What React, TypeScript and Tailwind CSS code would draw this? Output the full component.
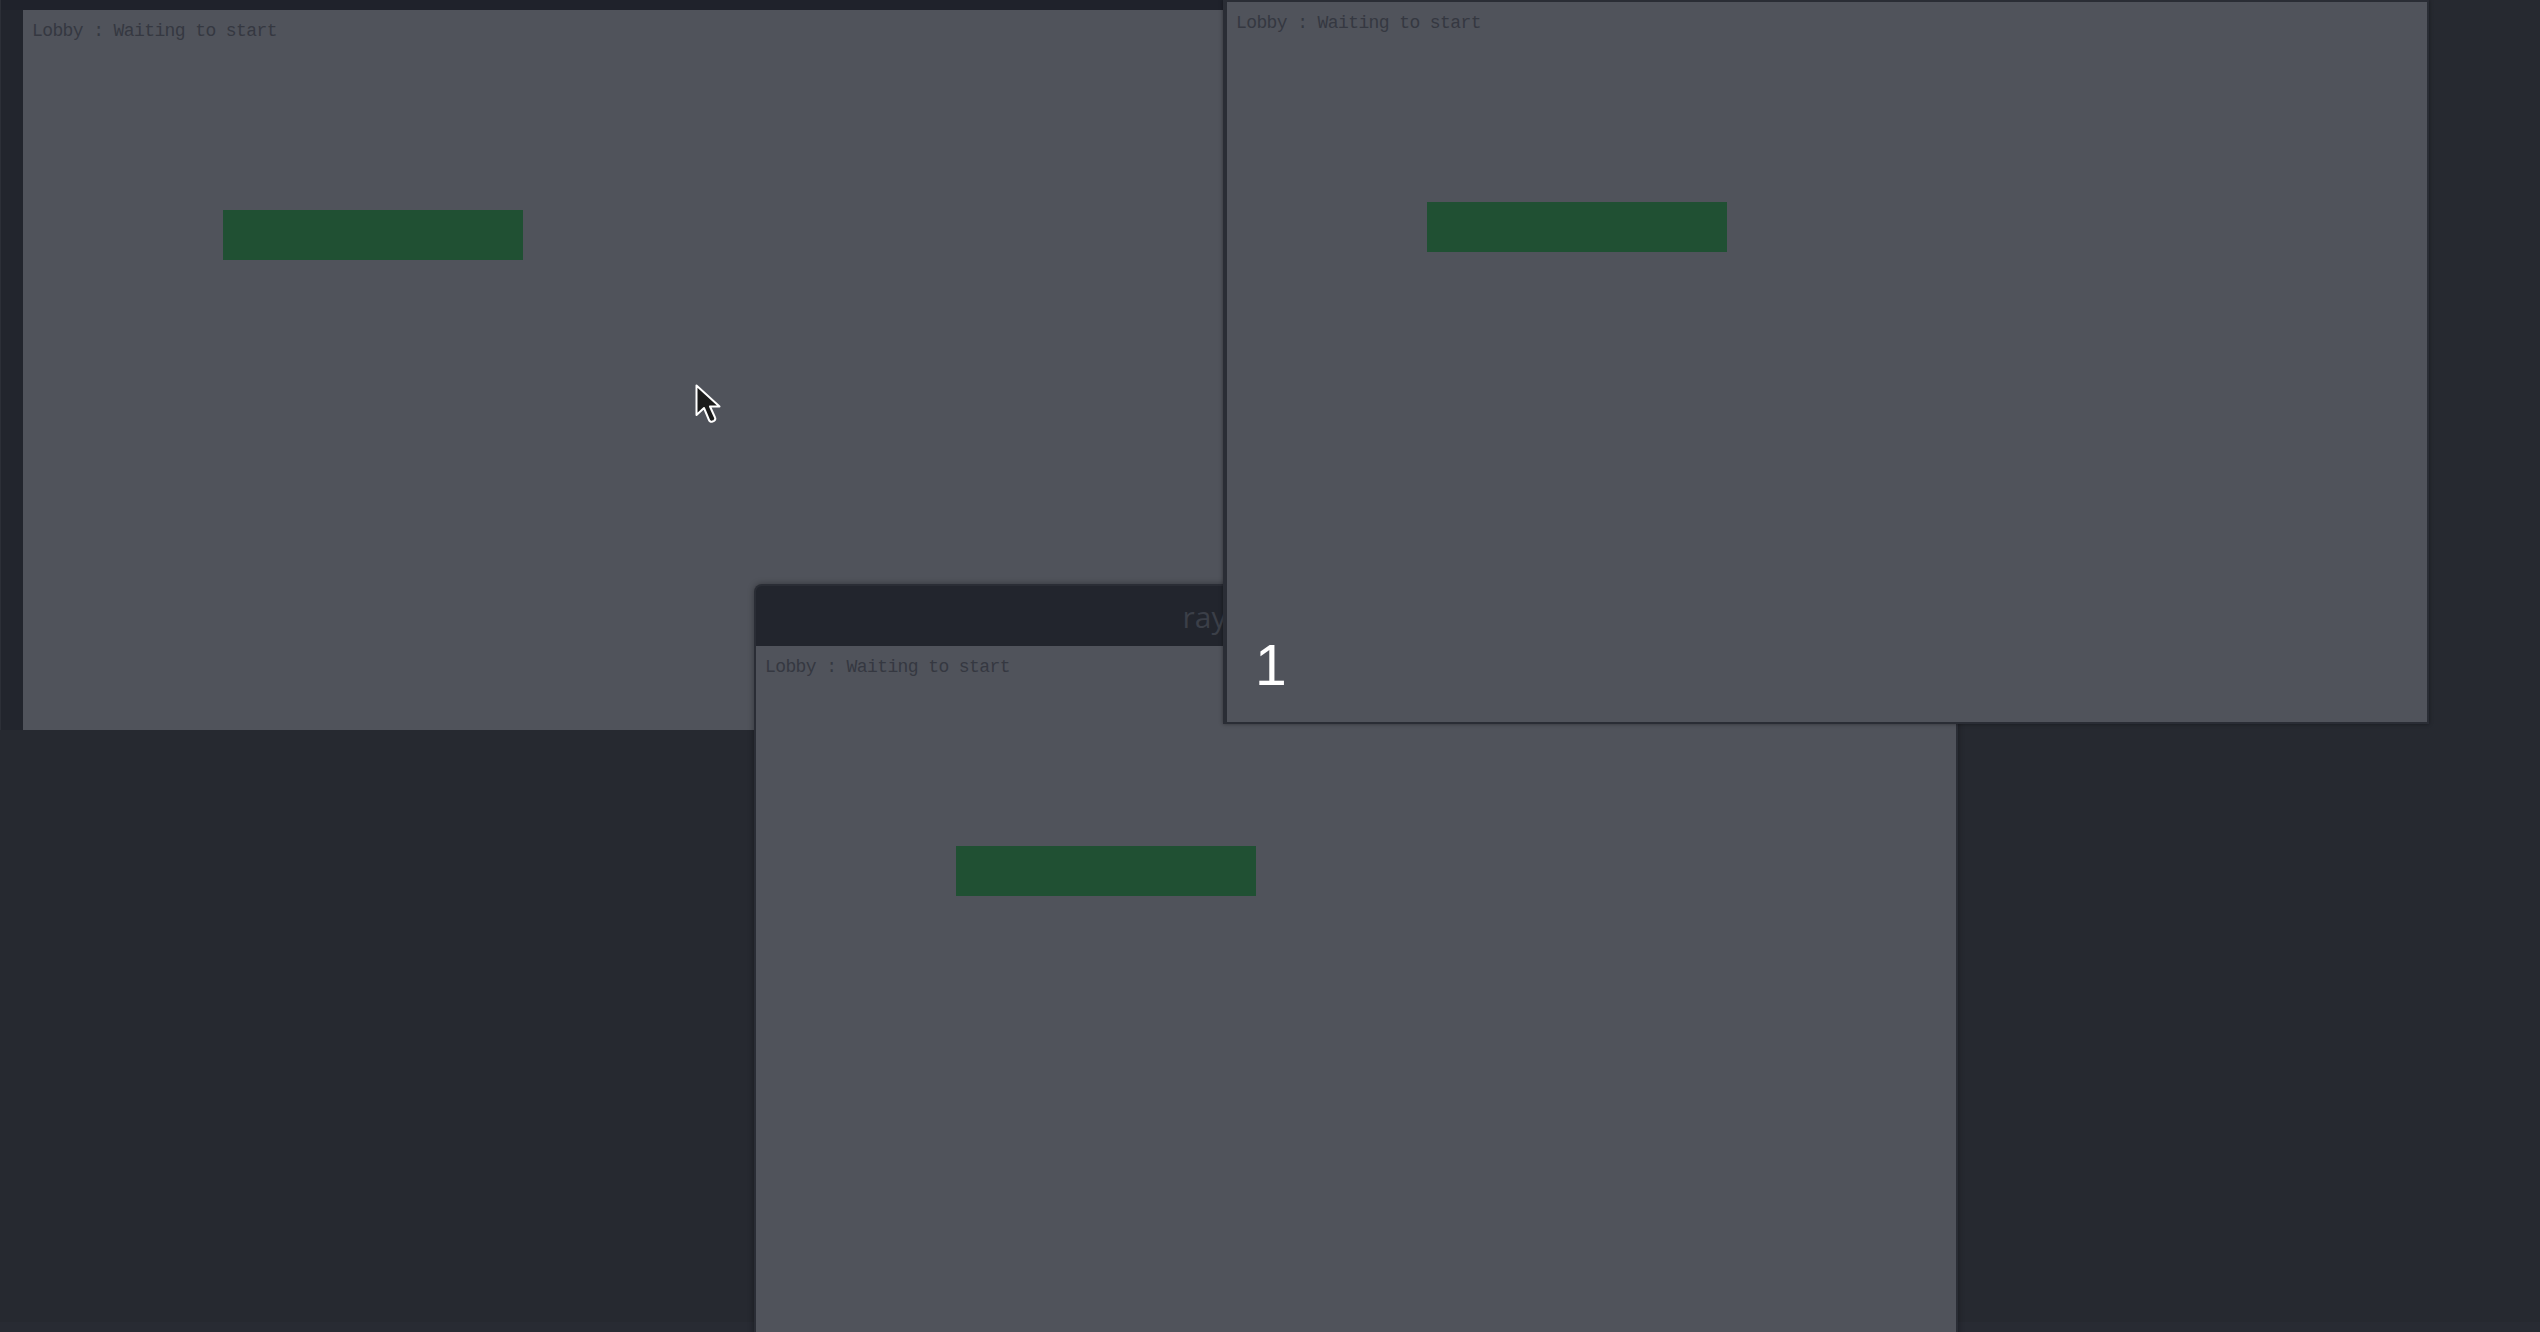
import React from "react";

function GameCanvas({ showCount }: { showCount?: boolean }) {
  return (
    <div className="flex flex-col items-start w-[1200px] h-[720px] bg-[#50535b] overflow-hidden pt-[9px]">
      <p className="pl-[9px] text-[18px] leading-[24px] tracking-[-0.6px] text-[#353841] font-['Liberation_Mono',monospace]">
        Lobby : Waiting to start
      </p>
      <div className="ml-[200px] mt-[167px] w-[300px] h-[50px] bg-[#205033]" />
      {showCount && (
        <span className="ml-[28px] mt-[378px] text-[57px] leading-[70px] text-white font-['Liberation_Sans',sans-serif]">
          1
        </span>
      )}
    </div>
  );
}

function Cursor() {
  return (
    <svg width="28" height="40" viewBox="0 0 28 40" className="absolute left-[695px] top-[384px]">
      <path
        d="M1.5 1.5 L1.5 31 L9 24 L14 36 Q15 38.5 17.5 37.5 L19 36.8 Q21 35.5 20 33.5 L15 22.5 L24.5 22.5 Z"
        fill="#1a1a1a"
        stroke="#ffffff"
        strokeWidth="2"
        strokeLinejoin="round"
      />
    </svg>
  );
}

export default function App() {
  return (
    <div className="relative w-[2540px] h-[1332px] overflow-hidden bg-[#262930]">
      {/* bottom taskbar edge */}
      <div className="absolute left-0 bottom-0 w-full h-[10px] bg-[#282b33]" />

      {/* window 1, its title bar is off screen above */}
      <div className="absolute left-0 top-0 flex flex-col border-l border-[#2c2f37] bg-[#22252d] pl-[22px]">
        <div className="h-[10px] -ml-[22px] bg-[#1f222b]" />
        <GameCanvas />
      </div>

      {/* window 2 */}
      <div className="absolute left-[754px] top-[584px] flex flex-col rounded-t-[8px] border-x-2 border-t-2 border-[#2a2d35] bg-[#22252d] shadow-[0_0_6px_rgba(0,0,0,0.35)]">
        <div className="h-[60px] flex items-center justify-center text-[30px] text-[#3b3f48] font-['Open_Sans',sans-serif]">
          raylib - multiplayer game
        </div>
        <GameCanvas />
      </div>

      {/* window 3 */}
      <div className="absolute left-[1223px] top-0 border-[2px] border-[#2a2d35] bg-[#2a2d35] shadow-[0_0_4px_rgba(0,0,0,0.4)] pl-[2px]">
        <GameCanvas showCount />
      </div>

      <Cursor />
    </div>
  );
}
